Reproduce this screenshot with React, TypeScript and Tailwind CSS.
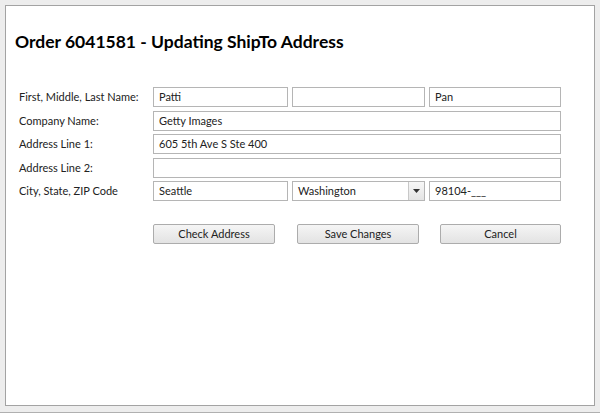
import React from "react";

const font = { fontFamily: 'Lato, "Noto Sans", sans-serif' };

function Field({ value, span = "" }: { value?: string; span?: string }) {
  return (
    <div
      className={`h-[20px] border border-[#b5b5b5] bg-white px-[5px] text-[11px] leading-[18px] text-[#222] ${span}`}
    >
      {value}
    </div>
  );
}

function Btn({ label, extra = "w-[122px]" }: { label: string; extra?: string }) {
  return (
    <button
      className={`block h-[20px] ${extra} rounded-[2px] border border-[#acacac] bg-gradient-to-b from-[#f5f5f5] to-[#e3e3e3] text-[11px] leading-[18px] text-[#222]`}
    >
      {label}
    </button>
  );
}

export default function App() {
  return (
    <div className="h-[413px] w-[600px] border-b border-[#b0b0b0] bg-[#ededed] pl-[5px] pr-[5px] pt-[5px]" style={font}>
      <div className="h-[401px] border border-[#a3a3a3] bg-white">
        <h1 className="pl-[9px] pt-[25px] text-[17.5px] font-bold leading-[22px] text-black">
          Order 6041581 - Updating ShipTo Address
        </h1>

        <div className="mt-[34px] grid grid-cols-[130px_135px_133px_132px] gap-x-[4px] gap-y-[3.5px] pl-[13px] text-[11px] text-[#222]">
          <div className="whitespace-nowrap leading-[20px]">First, Middle, Last Name:</div>
          <Field value="Patti" />
          <Field />
          <Field value="Pan" />

          <div className="leading-[20px]">Company Name:</div>
          <Field value="Getty Images" span="col-span-3" />

          <div className="leading-[20px]">Address Line 1:</div>
          <Field value="605 5th Ave S Ste 400" span="col-span-3" />

          <div className="leading-[20px]">Address Line 2:</div>
          <Field span="col-span-3" />

          <div className="whitespace-nowrap leading-[20px]">City, State, ZIP Code</div>
          <Field value="Seattle" />
          <div className="flex h-[20px] border border-[#b5b5b5] bg-white">
            <span className="flex-1 px-[5px] leading-[18px]">Washington</span>
            <span className="flex w-[16px] items-center justify-center border-l border-[#c8c8c8] bg-gradient-to-b from-[#f7f7f7] to-[#e4e4e4]">
              <svg width="7" height="4" viewBox="0 0 7 4">
                <path d="M0 0h7L3.5 4z" fill="#333" />
              </svg>
            </span>
          </div>
          <Field value="98104-___" />
        </div>

        <div className="mt-[23px] flex items-start pl-[147px]">
          <Btn label="Check Address" />
          <Btn label="Save Changes" extra="ml-[22px] w-[122px]" />
          <Btn label="Cancel" extra="ml-[21px] w-[121px]" />
        </div>
      </div>
    </div>
  );
}
